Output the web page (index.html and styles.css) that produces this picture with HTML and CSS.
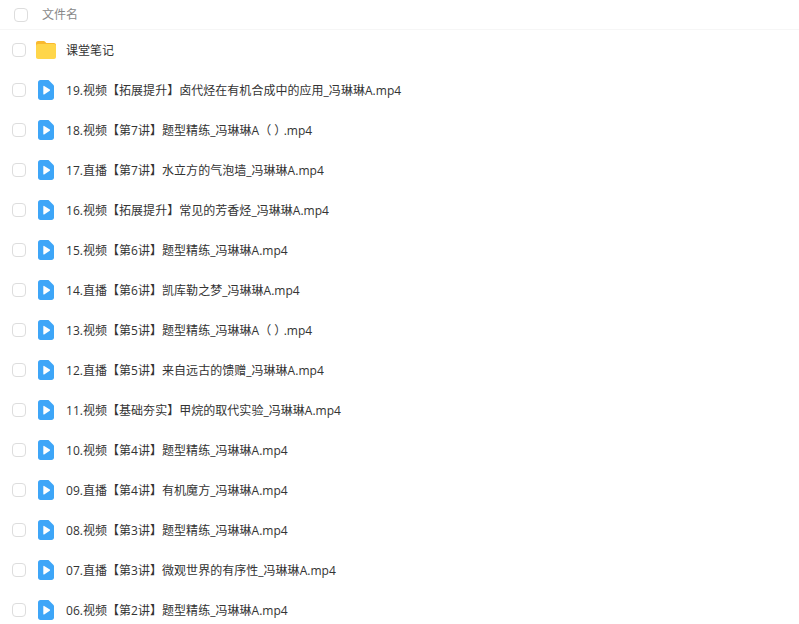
FILE: index.html
```html
<!doctype html>
<html>
<head>
<meta charset="utf-8">
<title>文件名</title>
<link rel="stylesheet" href="styles.css">
</head>
<body>
<svg class="defs" width="0" height="0">
	<symbol id="folder" viewBox="0 0 20 18">
		<path d="M2 0h5.600c.7 0 1.200.3 1.600.8L10.300 2H18c1.100 0 2 .9 2 2v2H0V2C0 .9.900 0 2 0z" fill="#f9b92f"/>
		<path d="M2 3h16c1.100 0 2 .9 2 2v11c0 1.100-.9 2-2 2H2c-1.100 0-2-.9-2-2V5c0-1.100.9-2 2-2z" fill="#ffd64a"/>
	</symbol>
	<symbol id="video" viewBox="0 0 16 20">
		<path d="M2.500 0h8L16 5.500v12c0 1.400-1.100 2.500-2.500 2.500h-11C1.100 20 0 18.900 0 17.500v-15C0 1.100 1.100 0 2.500 0z" fill="#3ea6f8"/>
		<path d="M5.300 6.400c0-.5.500-.8.900-.5l5.600 3.700c.4.300.4.800 0 1.100l-5.600 3.700c-.4.300-.9 0-.9-.5z" fill="#fff"/>
	</symbol>
</svg>
<div class="list">
	<div class="head">
		<span class="check"></span>
		<span class="head-name">文件名</span>
	</div>
	<div class="row"><span class="check"></span><svg class="icon-folder"><use href="#folder"/></svg><span class="name">课堂笔记</span></div>
	<div class="row"><span class="check"></span><svg class="icon-video"><use href="#video"/></svg><span class="name">19.视频【拓展提升】卤代烃在有机合成中的应用_冯琳琳A.mp4</span></div>
	<div class="row"><span class="check"></span><svg class="icon-video"><use href="#video"/></svg><span class="name">18.视频【第7讲】题型精练_冯琳琳A（ <span class="paren">）</span>.mp4</span></div>
	<div class="row"><span class="check"></span><svg class="icon-video"><use href="#video"/></svg><span class="name">17.直播【第7讲】水立方的气泡墙_冯琳琳A.mp4</span></div>
	<div class="row"><span class="check"></span><svg class="icon-video"><use href="#video"/></svg><span class="name">16.视频【拓展提升】常见的芳香烃_冯琳琳A.mp4</span></div>
	<div class="row"><span class="check"></span><svg class="icon-video"><use href="#video"/></svg><span class="name">15.视频【第6讲】题型精练_冯琳琳A.mp4</span></div>
	<div class="row"><span class="check"></span><svg class="icon-video"><use href="#video"/></svg><span class="name">14.直播【第6讲】凯库勒之梦_冯琳琳A.mp4</span></div>
	<div class="row"><span class="check"></span><svg class="icon-video"><use href="#video"/></svg><span class="name">13.视频【第5讲】题型精练_冯琳琳A（ <span class="paren">）</span>.mp4</span></div>
	<div class="row"><span class="check"></span><svg class="icon-video"><use href="#video"/></svg><span class="name">12.直播【第5讲】来自远古的馈赠_冯琳琳A.mp4</span></div>
	<div class="row"><span class="check"></span><svg class="icon-video"><use href="#video"/></svg><span class="name">11.视频【基础夯实】甲烷的取代实验_冯琳琳A.mp4</span></div>
	<div class="row"><span class="check"></span><svg class="icon-video"><use href="#video"/></svg><span class="name">10.视频【第4讲】题型精练_冯琳琳A.mp4</span></div>
	<div class="row"><span class="check"></span><svg class="icon-video"><use href="#video"/></svg><span class="name">09.直播【第4讲】有机魔方_冯琳琳A.mp4</span></div>
	<div class="row"><span class="check"></span><svg class="icon-video"><use href="#video"/></svg><span class="name">08.视频【第3讲】题型精练_冯琳琳A.mp4</span></div>
	<div class="row"><span class="check"></span><svg class="icon-video"><use href="#video"/></svg><span class="name">07.直播【第3讲】微观世界的有序性_冯琳琳A.mp4</span></div>
	<div class="row"><span class="check"></span><svg class="icon-video"><use href="#video"/></svg><span class="name">06.视频【第2讲】题型精练_冯琳琳A.mp4</span></div>
</div>
</body>
</html>
```

FILE: styles.css
```css
*{ margin:0; padding:0; box-sizing:border-box;}
html,body{ height:100%; overflow:hidden; background:#fff;}
body{ font-family:"Open Sans","Noto Sans CJK SC",sans-serif; font-size:12px; color:#333;}
.defs{ display:block; height:0;}

.list{ display:flex; flex-direction:column;}

.head{ display:flex; align-items:center; height:30px; padding-left:13px; border-bottom:1px solid #f6f6f6; color:#888;}
.head .check{ margin-left:1px;}
.head-name{ margin-left:14px; padding-bottom:1px;}

.row{ display:flex; align-items:center; flex:none; height:40px; padding-left:12px;}
.check{ flex:none; width:14px; height:14px; border:1px solid #ddd; border-radius:4px; background:#fff;}
.icon-folder{ flex:none; width:20px; height:18px; margin-left:10px; margin-right:1px;}
.icon-video{ flex:none; width:16px; height:20px; margin-left:12px; margin-right:3px;}
.name{ margin-left:9px; letter-spacing:.03px; white-space:nowrap;}
.paren{ letter-spacing:-2.7px;}
```
